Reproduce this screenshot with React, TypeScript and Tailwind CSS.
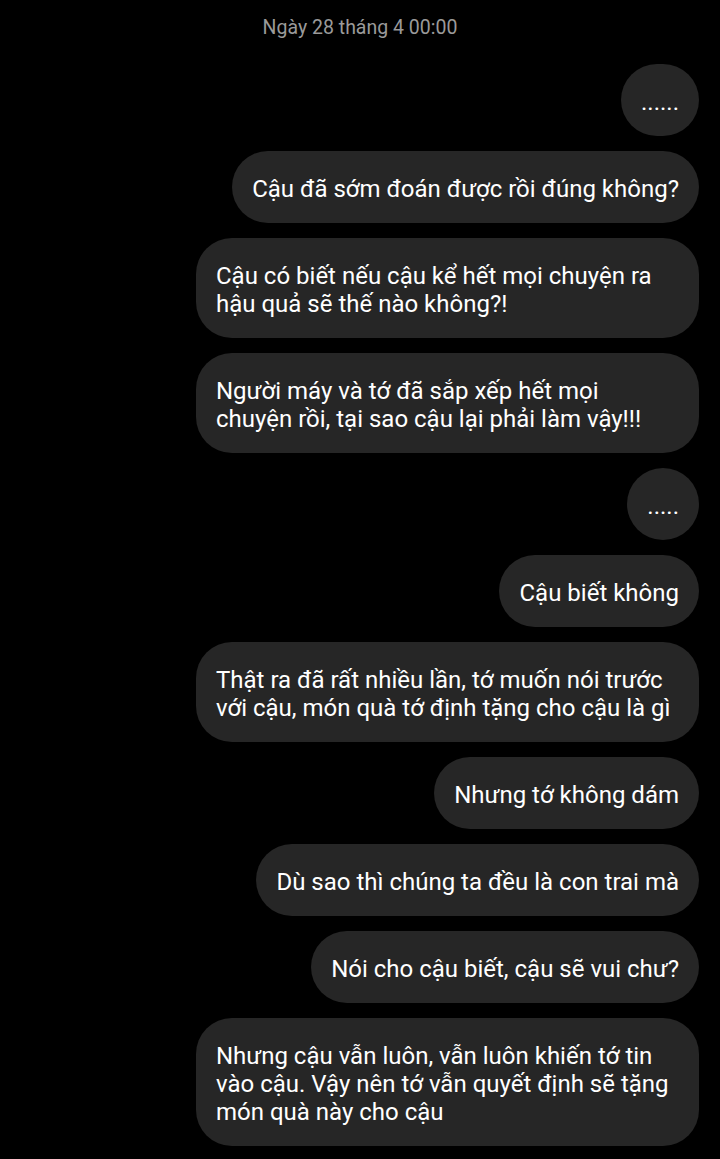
const messages = [
  '......',
  'Cậu đã sớm đoán được rồi đúng không?',
  'Cậu có biết nếu cậu kể hết mọi chuyện ra hậu quả sẽ thế nào không?!',
  'Người máy và tớ đã sắp xếp hết mọi chuyện rồi, tại sao cậu lại phải làm vậy!!!',
  '.....',
  'Cậu biết không',
  'Thật ra đã rất nhiều lần, tớ muốn nói trước với cậu, món quà tớ định tặng cho cậu là gì',
  'Nhưng tớ không dám',
  'Dù sao thì chúng ta đều là con trai mà',
  'Nói cho cậu biết, cậu sẽ vui chư?',
  'Nhưng cậu vẫn luôn, vẫn luôn khiến tớ tin vào cậu. Vậy nên tớ vẫn quyết định sẽ tặng món quà này cho cậu',
];

export default function App() {
  return (
    <div className="min-h-[1159px] w-[720px] bg-black font-['Roboto',sans-serif] pt-[17px] pb-[13px]">
      <div className="text-center text-[19.5px] leading-[22px] text-[#9a9a9a]">Ngày 28 tháng 4 00:00</div>

      <div className="mt-[25px] flex flex-col items-end gap-[15px] pr-[21px]">
        {messages.map((m, i) => (
          <div
            key={i}
            className="max-w-[503px] rounded-[36px] bg-[#262626] px-[20px] pt-[24px] pb-[20px] text-[24px] leading-[28px] text-white"
          >
            {m}
          </div>
        ))}
      </div>
    </div>
  );
}
